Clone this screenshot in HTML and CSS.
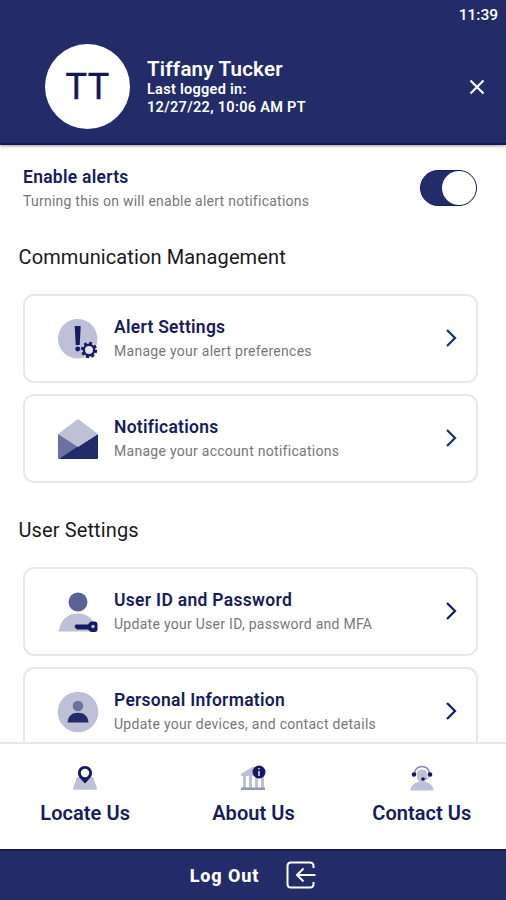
FILE: index.html
```html
<!DOCTYPE html>
<html lang="en">
<head>
<meta charset="utf-8">
<title>Profile and Settings</title>
<link rel="stylesheet" href="styles.css">
</head>
<body>
<div class="app">
  <header class="header">
    <div class="status"><span>11:39</span></div>
    <div class="profile">
      <div class="avatar"><span>TT</span></div>
      <div class="identity">
        <h1 class="name">Tiffany Tucker</h1>
        <p class="login">Last logged in:</p>
        <p class="login date">12/27/22, 10:06 AM PT</p>
      </div>
      <svg class="close" viewBox="0 0 16 16"><path d="M1.500 1.500l13 13M14.500 1.500l-13 13"/></svg>
    </div>
  </header>
  <main class="content">
    <section class="alerts">
      <div>
        <h3 class="title">Enable alerts</h3>
        <p class="desc d-enable">Turning this on will enable alert notifications</p>
      </div>
      <div class="toggle"><div class="knob"></div></div>
    </section>
    <h2 class="section s-comm">Communication Management</h2>
    <div class="cards">
      <div class="card">
        <svg class="icon" viewBox="0 0 42 42">
          <circle cx="20.700" cy="20.700" r="19.700" fill="#bdc0d6"/>
          <path d="M17.700 8h6l-1 19h-4z" fill="#171a62"/><circle cx="20.700" cy="31" r="2.400" fill="#171a62"/>
          <circle cx="32" cy="32" r="8" fill="#d5d7e5"/>
          <circle cx="32" cy="32" r="6.900" fill="none" stroke="#171a62" stroke-width="2.600" stroke-dasharray="2.900 2.519"/>
          <circle cx="32" cy="32" r="5.200" fill="#e3e4ee" stroke="#171a62" stroke-width="2.400"/>
        </svg>
        <div class="copy">
          <h3 class="title">Alert Settings</h3>
          <p class="desc">Manage your alert preferences</p>
        </div>
        <svg class="chevron blue" viewBox="0 0 12 20"><path d="M2 2l8 8-8 8"/></svg>
      </div>
      <div class="card">
        <svg class="icon" viewBox="0 0 42 42">
          <path d="M1 16L24 28 3 41H2a1 1 0 0 1-1-1z" fill="#6b71a0"/>
          <path d="M41 16v24a1 1 0 0 1-1 1H2L20 29z" fill="#232c6a"/>
          <path d="M21 1l20 15-20 13L1 16z" fill="#bdc0d6"/>
        </svg>
        <div class="copy">
          <h3 class="title">Notifications</h3>
          <p class="desc">Manage your account notifications</p>
        </div>
        <svg class="chevron blue" viewBox="0 0 12 20"><path d="M2 2l8 8-8 8"/></svg>
      </div>
    </div>
    <h2 class="section s-user">User Settings</h2>
    <div class="cards">
      <div class="card">
        <svg class="icon" viewBox="0 0 42 42">
          <circle cx="21" cy="11" r="9.500" fill="#5b6296"/>
          <path d="M1.500 40.500C4 28 11 22.500 21 22.500S38 29 40 40.500z" fill="#bdc0d6"/>
          <path d="M18.500 33.500h12.500l1.500-2q1-1 2.500-1h2.500q3 0 3 3v4.500q0 3-3 3H35q-1.500 0-2.500-1l-1.500-1.500H20l-2.500-2.500z" fill="#171a62"/>
          <circle cx="36" cy="35.500" r="1.700" fill="#bdc0d6"/>
        </svg>
        <div class="copy">
          <h3 class="title wide">User ID and Password</h3>
          <p class="desc">Update your User ID, password and MFA</p>
        </div>
        <svg class="chevron" viewBox="0 0 12 20"><path d="M2 2l8 8-8 8"/></svg>
      </div>
      <div class="card">
        <svg class="icon" viewBox="0 0 42 42">
          <circle cx="21" cy="21" r="20.300" fill="#bdc0d6"/>
          <circle cx="21" cy="15" r="5.300" fill="#6b71a0"/>
          <path d="M10.500 31.500C11 25 15 21.800 21 21.800s10 3.200 10.500 9.700z" fill="#232c6a"/>
        </svg>
        <div class="copy">
          <h3 class="title">Personal Information</h3>
          <p class="desc">Update your devices, and contact details</p>
        </div>
        <svg class="chevron" viewBox="0 0 12 20"><path d="M2 2l8 8-8 8"/></svg>
      </div>
    </div>
  </main>
  <nav class="nav">
    <div class="tab">
      <svg class="tab-icon" viewBox="0 0 26 26">
        <path d="M5 12h16l4 11.500c.2.800 0 1.200-1 1.200H2c-1 0-1.200-.4-1-1.200z" fill="#bdc0d6"/>
        <path d="M13 1C8.800 1 6 4 6 8c0 4 3 6 7 10.500C17 14 20 12 20 8c0-4-2.800-7-7-7z" fill="#171a62"/>
        <circle cx="13" cy="8" r="4.200" fill="#fff"/>
      </svg>
      <span class="tab-label">Locate Us</span>
    </div>
    <div class="tab">
      <svg class="tab-icon" viewBox="0 0 26 26">
        <path d="M1 9L13 1.500 25 9v2H1zM3 11h3v12H3zM9 11h3v12H9zM15 11h3v12h-3zM21 11h3v12h-3z" fill="#bdc0d6"/>
        <path d="M1 22.500h24V25H1z" fill="#9296ba"/>
        <circle cx="19" cy="7" r="6.500" fill="#171a62"/>
        <path d="M19 6v5M19 3v1.500" stroke="#c8cadd" stroke-width="1.700"/>
      </svg>
      <span class="tab-label">About Us</span>
    </div>
    <div class="tab">
      <svg class="tab-icon" viewBox="0 0 26 26">
        <path d="M1.500 25.500c0-4.500 3-7 7.500-8.500h8c4.500 1.500 7.500 4 7.500 8.500z" fill="#bdc0d6"/>
        <path d="M8 9q0-4.500 5-4.500T18 9v3c0 7-10 7-10 0z" fill="#bdc0d6"/>
        <path d="M5.500 9c0-10 15-10 15 0" fill="none" stroke="#8186ae" stroke-width="1.500"/>
        <path d="M20 11c0 2-2 3-5 3" fill="none" stroke="#8b8fb5"/>
        <circle cx="5" cy="9.500" r="2.300" fill="#171a62"/><circle cx="21" cy="9.500" r="2.300" fill="#171a62"/><circle cx="14" cy="14" r="1.800" fill="#171a62"/>
      </svg>
      <span class="tab-label">Contact Us</span>
    </div>
  </nav>
  <footer class="logout">
    <span class="logout-label">Log Out</span>
    <svg class="logout-icon" viewBox="0 0 30 28"><path d="M27.500 7V5q0-3.500-3.500-3.500H5Q1.500 1.500 1.500 5v18q0 3.500 3.500 3.500h19q3.500 0 3.500-3.500v-2M29.500 14H11M17.500 7.500L11 14l6.500 6.500"/></svg>
  </footer>
</div>
</body>
</html>
```

FILE: styles.css
```css
* { box-sizing: border-box; }
body { margin: 0; font-family: Roboto, "Liberation Sans", sans-serif; background: #fff; }
h1, h2, h3, p { margin: 0; white-space: nowrap; }
.app { width: 506px; height: 900px; display: flex; flex-direction: column; overflow: hidden; }

.header { height: 145px; flex: none; background: #232c69; color: #fff; border-bottom: 2px solid #151955; box-shadow: 0 1px 3px rgba(0,0,0,.4); }
.status { height: 30px; display: flex; justify-content: flex-end; align-items: center; padding-right: 8px; font-size: 15.500px; font-weight: 500; }
.profile { display: flex; align-items: center; height: 85px; margin-top: 14px; padding: 0 21px 0 45px; }
.avatar { width: 85px; height: 85px; border-radius: 50%; background: #fff; color: #141858; display: flex; align-items: center; justify-content: center; font-size: 36px; letter-spacing: .3px; -webkit-text-stroke: .4px #141858; }
.identity { margin-left: 17px; flex: 1; padding-top: 2px; }
.name { font-size: 20.500px; line-height: 23px; font-weight: 600; letter-spacing: .22px; }
.login { font-size: 14.500px; line-height: 18px; font-weight: 600; letter-spacing: .28px; }
.login.date { letter-spacing: .3px; }
.close { width: 16px; height: 16px; fill: none; stroke: #fff; stroke-width: 2.200; }

.content { flex: 1; min-height: 0; overflow: hidden; padding-top: 19px; }
.alerts { height: 50px; padding: 2px 29px 0 23px; display: flex; justify-content: space-between; align-items: flex-start; }
.toggle { width: 57px; height: 36px; margin-top: 4px; border-radius: 18px; background: #232c69; border: 1.500px solid #171b60; display: flex; justify-content: flex-end; }
.knob { width: 34px; height: 34px; border-radius: 50%; background: #fff; }
.title { font-size: 17.500px; line-height: 22px; font-weight: 600; color: #171b60; letter-spacing: .26px; }
.title.wide { letter-spacing: .3px; }
.desc { font-size: 14px; line-height: 20px; margin-top: 3px; color: #777; letter-spacing: .28px; }
.desc.d-enable { letter-spacing: .25px; }
.section { font-size: 20px; line-height: 26px; font-weight: 400; color: #191919; padding-left: 18.500px; margin-top: 30px; letter-spacing: .12px; }
.cards { display: grid; gap: 11px; padding: 0 28px 0 23px; margin-top: 24px; }
.section.s-user { margin-top: 34px; }
.card { height: 89px; border: 2px solid #e8e8e8; border-radius: 11px; display: flex; align-items: center; padding: 0 19px 0 32px; }
.icon { width: 42px; height: 42px; }
.copy { flex: 1; margin-left: 15px; }
.chevron { width: 12px; height: 20px; margin-bottom: 2px; fill: none; stroke: #191c69; stroke-width: 2.300; }
.chevron.blue { stroke: #183574; }

.nav { height: 107px; flex: none; background: #fff; border-top: 2px solid #e8e8e8; display: grid; grid-template-columns: repeat(3, 1fr); padding-left: 1px; }
.tab { display: flex; flex-direction: column; align-items: center; padding-top: 21px; }
.tab-icon { width: 26px; height: 26px; }
.tab-label { font-size: 20px; line-height: 24px; margin-top: 10px; font-weight: 600; color: #171b60; letter-spacing: .05px; }
.logout { height: 51px; flex: none; background: #232c69; border-top: 2px solid #151955; display: flex; align-items: center; justify-content: center; gap: 27px; color: #fff; padding-bottom: 1px; }
.logout-label { font-size: 18px; font-weight: 800; letter-spacing: .9px; }
.logout-icon { width: 30px; height: 28px; fill: none; stroke: #fff; stroke-width: 2; }
```
